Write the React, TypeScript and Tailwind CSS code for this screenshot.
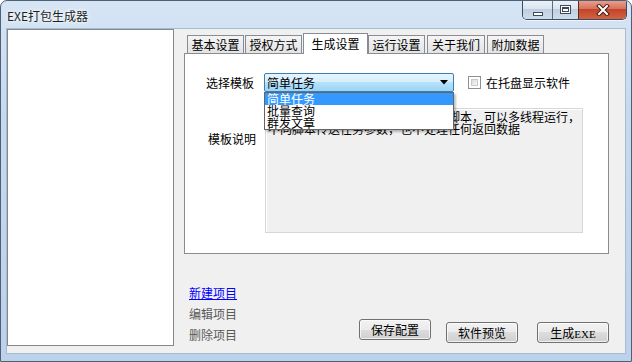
// EXE打包生成器 - Win7 style packer window

const font = "font-['Noto_Sans_CJK_SC','Liberation_Sans',sans-serif]";

const tabs = [
  { label: '基本设置', cls: 'w-[57px]' },
  { label: '授权方式', cls: 'w-[57px] ml-[1px]' },
  { label: '生成设置', cls: 'w-[65px] ml-[1px]', active: true },
  { label: '运行设置', cls: 'w-[57px]' },
  { label: '关于我们', cls: 'w-[58px] ml-[2px]' },
  { label: '附加数据', cls: 'w-[57px] ml-[2px]' },
];

const templates = ['简单任务', '批量查询', '群发文章'];

function CaptionButtons() {
  return (
    <div className="-mt-px -mr-[2px] flex h-[20px] overflow-hidden rounded-b-[5px] border border-t-0 border-[#3b4b61] shadow-[0_1px_0_rgba(255,255,255,0.6)]">
      <div className="flex w-[29px] items-end justify-center pb-[3px] bg-[linear-gradient(#edf2f8_0%,#dbe5f0_45%,#c0cfe0_50%,#cfdcea_100%)]">
        <div className="h-[4px] w-[10px] border border-[#3f4b5b] bg-white" />
      </div>
      <div className="flex w-[26px] items-center justify-center border-l border-[#5b6b80] bg-[linear-gradient(#edf2f8_0%,#dbe5f0_45%,#c0cfe0_50%,#cfdcea_100%)]">
        <div className="flex h-[9px] w-[11px] items-center justify-center border border-[#3f4b5b] bg-white">
          <div className="h-[5px] w-[7px] border border-[#3f4b5b] border-t-2" />
        </div>
      </div>
      <div className="flex w-[48px] items-center justify-center border-l border-[#5b2a20] bg-[linear-gradient(#eaa594_0%,#d8735c_45%,#c3442b_50%,#d2633f_100%)]">
        <svg width="14" height="12" viewBox="0 0 14 12">
          <path d="M3 2 L11 10 M11 2 L3 10" stroke="#4a1c12" strokeWidth="4" strokeLinecap="square" />
          <path d="M3 2 L11 10 M11 2 L3 10" stroke="#ffffff" strokeWidth="2" strokeLinecap="square" />
        </svg>
      </div>
    </div>
  );
}

function WinButton({ children }: { children: React.ReactNode }) {
  return (
    <button className="h-[21px] w-[72px] rounded-[3px] border border-[#707070] bg-[linear-gradient(#f2f2f2_0%,#ebebeb_50%,#dddddd_50%,#cfcfcf_100%)] text-[12px] leading-[19px] text-black shadow-[inset_0_0_0_1px_rgba(255,255,255,0.7)]">
      {children}
    </button>
  );
}

export default function App() {
  return (
    <div
      className={`${font} relative flex h-[362px] w-[632px] flex-col overflow-hidden rounded-t-[7px] border border-[#4f5f75] bg-[linear-gradient(180deg,#d6e5f4_0%,#c6daef_30%,#bcd2ea_100%)] px-[6px] pb-[8px] text-black`}
    >
      {/* Title bar */}
      <div className="flex h-[28px] shrink-0 items-start justify-between">
        <span className="mt-[8px] text-[12px] leading-[14px] text-[#1e1e1e] [text-shadow:0_0_6px_#ffffff,0_0_3px_#ffffff]">
          EXE打包生成器
        </span>
        <CaptionButtons />
      </div>

      {/* Client area */}
      <div className="flex flex-1 bg-[#f0f0f0] shadow-[0_0_0_1px_#a9bccf]">
        {/* Project list */}
        <div className="h-[317px] w-[167px] border border-[#828790] bg-white" />

        <div className="ml-[10px] flex w-[425px] flex-col pt-[4px]">
          {/* Tabs */}
          <div className="relative z-10 -mb-px flex h-[21px] items-end pl-[3px]">
            {tabs.map((t) =>
              t.active ? (
                <div
                  key={t.label}
                  className={`${t.cls} h-[21px] border border-b-0 border-[#898c95] bg-white text-center text-[12px] leading-[20px]`}
                >
                  {t.label}
                </div>
              ) : (
                <div
                  key={t.label}
                  className={`${t.cls} h-[19px] border border-[#898c95] bg-[linear-gradient(#f5f5f5,#e3e3e3)] text-center text-[12px] leading-[18px]`}
                >
                  {t.label}
                </div>
              )
            )}
          </div>

          {/* Tab panel */}
          <div className="h-[201px] border border-[#898c95] bg-white pt-[19px]">
            <div className="relative flex h-[19px] items-center">
              <span className="w-[79px] pl-[21px] text-[12px] leading-[12px]">选择模板</span>
              <div className="relative flex h-[19px] w-[190px] items-center rounded-[2px] border border-[#3c7fb1] bg-[linear-gradient(#e6f4fd_0%,#d4eefc_50%,#b6e2fc_50%,#9dd3f3_100%)] pl-[2px]">
                <span className="text-[12px] leading-[12px]">简单任务</span>
                <svg className="absolute right-[5px] top-[6px]" width="8" height="5" viewBox="0 0 8 5">
                  <path d="M0 0 H8 L4 4.5 Z" fill="#000" />
                </svg>
              </div>
              <div className="ml-[14px] h-[13px] w-[13px] border border-[#8f8f8f] bg-white p-[2px]">
                <div className="h-full w-full border border-[#c8c8c8] bg-[linear-gradient(135deg,#dcdcdc,#f7f7f7)]" />
              </div>
              <span className="ml-[5px] text-[12px] leading-[12px]">在托盘显示软件</span>

              {/* Opened dropdown list */}
              <div className="absolute left-[79px] top-[19px] z-20 w-[190px] border border-[#646464] bg-white shadow-[2px_2px_2px_rgba(0,0,0,0.25)]">
                {templates.map((name, i) => (
                  <div
                    key={name}
                    className={
                      i === 0
                        ? 'h-[12px] bg-[#3399ff] pl-[2px] text-[12px] leading-[12px] text-white'
                        : 'h-[12px] pl-[2px] text-[12px] leading-[12px] text-black'
                    }
                  >
                    {name}
                  </div>
                ))}
              </div>
            </div>

            <div className="mt-[16px] flex items-start">
              <span className="mt-[25px] w-[80px] pl-[23px] text-[12px] leading-[12px]">模板说明</span>
              <div className="h-[125px] w-[318px] overflow-hidden whitespace-nowrap border border-[#d3d8de] bg-[#f0f0f0] pl-[2px] pt-[2px] text-[12px] leading-[12px] shadow-[inset_1px_1px_0_#ffffff]">
                <div>简单任务模板，只运行一个单独的脚本，可以多线程运行，</div>
                <div>不向脚本传送任务参数，也不处理任何返回数据</div>
              </div>
            </div>
          </div>

          {/* Bottom: project links + action buttons */}
          <div className="mt-[28px] flex items-start">
            <div className="flex w-[176px] flex-col pl-[5px] text-[12px] leading-[21px]">
              <span className="h-[21px] text-[#0000ff] underline">新建项目</span>
              <span className="h-[21px] text-[#595959]">编辑项目</span>
              <span className="h-[21px] text-[#595959]">删除项目</span>
            </div>
            <div className="mt-[37px] flex">
              <WinButton>保存配置</WinButton>
              <div className="ml-[15px]">
                <WinButton>软件预览</WinButton>
              </div>
              <div className="ml-[19px]">
                <WinButton>
                  生成<span className="font-['Liberation_Serif',serif] text-[11px]">EXE</span>
                </WinButton>
              </div>
            </div>
          </div>
        </div>
      </div>
    </div>
  );
}
